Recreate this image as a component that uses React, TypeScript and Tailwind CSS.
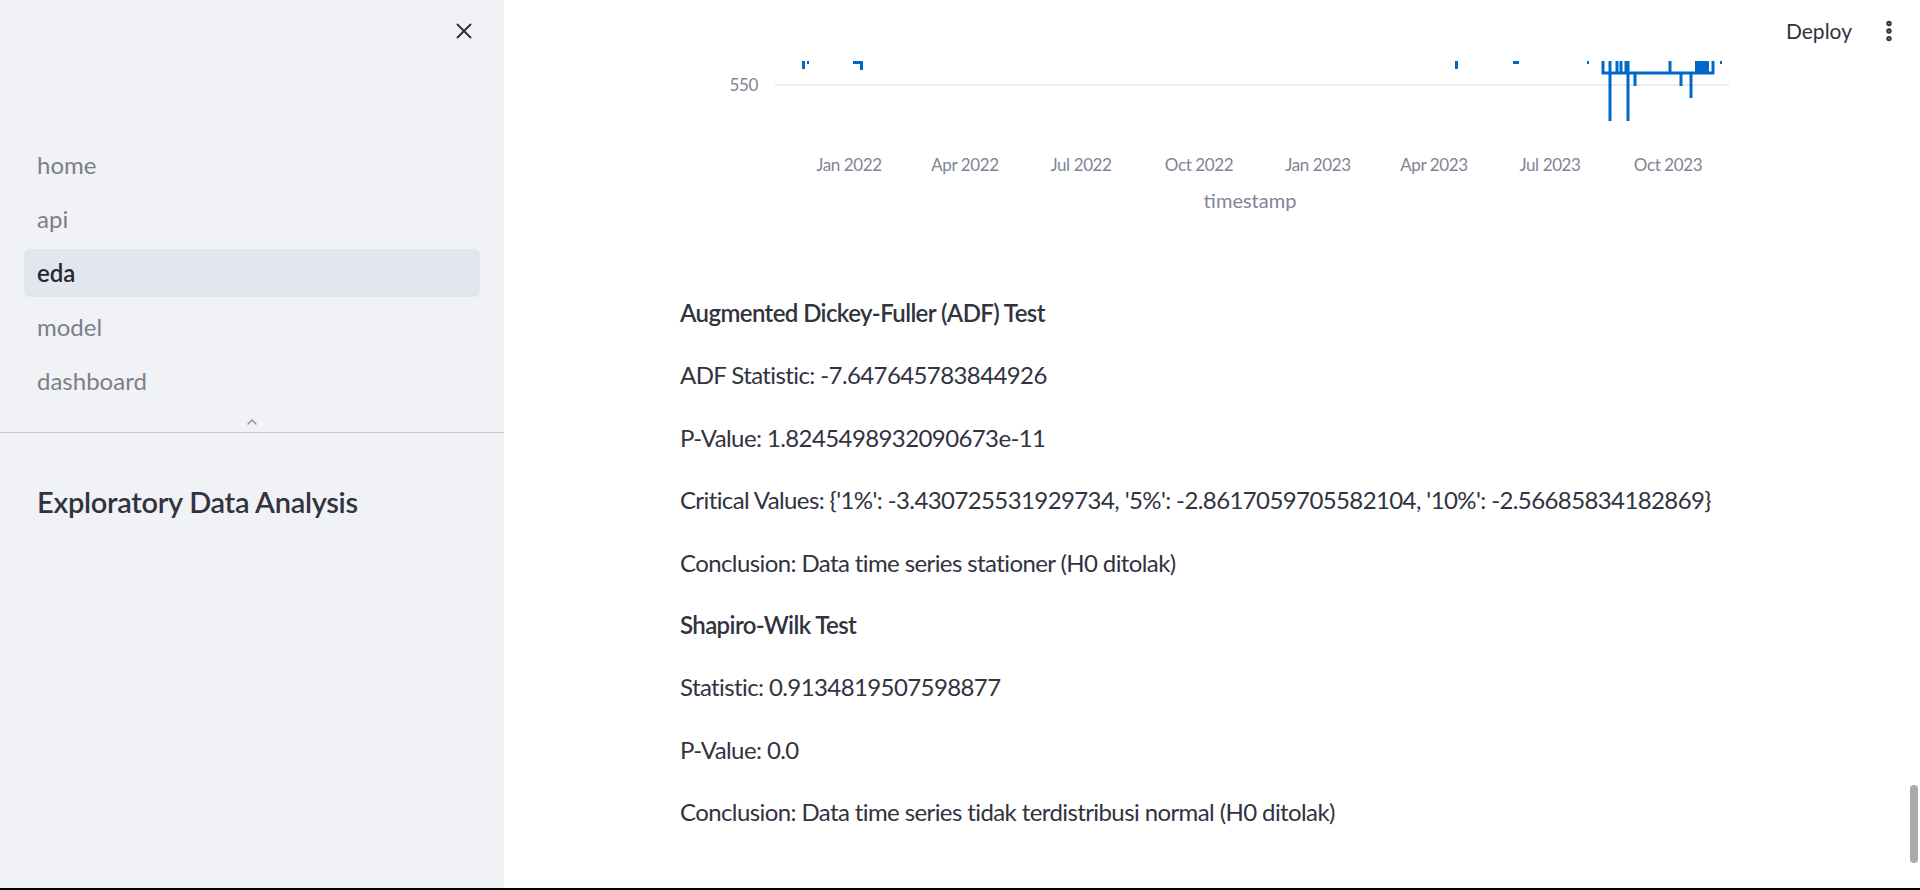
import { X, ChevronUp, EllipsisVertical } from "lucide-react";

const navItems = ["home", "api", "eda", "model", "dashboard"];

const ticks = [
  { x: 169, label: "Jan 2022" },
  { x: 285, label: "Apr 2022" },
  { x: 401, label: "Jul 2022" },
  { x: 519, label: "Oct 2022" },
  { x: 638, label: "Jan 2023" },
  { x: 754, label: "Apr 2023" },
  { x: 870, label: "Jul 2023" },
  { x: 988, label: "Oct 2023" },
];

const results = [
  { text: "Augmented Dickey-Fuller (ADF) Test", bold: true },
  { text: "ADF Statistic: -7.647645783844926" },
  { text: "P-Value: 1.8245498932090673e-11" },
  {
    text: "Critical Values: {'1%': -3.430725531929734, '5%': -2.8617059705582104, '10%': -2.56685834182869}",
  },
  { text: "Conclusion: Data time series stationer (H0 ditolak)" },
  { text: "Shapiro-Wilk Test", bold: true },
  { text: "Statistic: 0.9134819507598877" },
  { text: "P-Value: 0.0" },
  { text: "Conclusion: Data time series tidak terdistribusi normal (H0 ditolak)" },
];

function Chart() {
  const blue = "#0068c9";
  return (
    <svg width="1064" height="170" viewBox="0 0 1064 170" className="block">
      <line x1="95" y1="24" x2="1049" y2="24" stroke="#e6e6e6" strokeWidth="1.5" />
      <text x="78" y="30" textAnchor="end" fontSize="17" fill="#808495" fontFamily="Lato, sans-serif" letterSpacing="-0.4">
        550
      </text>
      {ticks.map((t) => (
        <text
          key={t.label}
          x={t.x}
          y="110"
          textAnchor="middle"
          fontSize="17"
          fill="#808495"
          fontFamily="Lato, sans-serif"
          letterSpacing="-0.4"
        >
          {t.label}
        </text>
      ))}
      <text x="570" y="147" textAnchor="middle" fontSize="20" fill="#808495" fontFamily="Lato, sans-serif">
        timestamp
      </text>

      {/* early sparse points */}
      <rect x="122" y="0" width="3" height="8" fill={blue} />
      <rect x="127" y="0" width="2" height="3" fill={blue} />
      <rect x="173" y="0" width="10" height="3" fill={blue} />
      <rect x="180" y="0" width="3" height="9" fill={blue} />
      <rect x="775" y="0" width="3" height="8" fill={blue} />
      <rect x="833" y="0" width="6" height="3" fill={blue} />
      <rect x="907" y="0" width="2" height="3" fill={blue} />

      {/* dense cluster */}
      <g stroke={blue} strokeWidth="3" fill="none">
        <path d="M923 0 V12 H1033 V0" />
        <path d="M930 0 V60" />
        <path d="M937 0 V12" />
        <path d="M941 0 V12" />
        <path d="M946 0 V12" />
        <path d="M948 0 V60" />
        <path d="M955 12 V25" />
        <path d="M990 0 V12" />
        <path d="M1001 12 V25" />
        <path d="M1011 12 V37" />
      </g>
      <rect x="1015" y="0" width="14" height="12" fill={blue} />
      <rect x="1040" y="0" width="2" height="3" fill={blue} />
    </svg>
  );
}

export default function App() {
  return (
    <div className="w-[1920px] h-[890px] overflow-hidden flex flex-col bg-white font-['Lato',sans-serif] text-[#31333f]">
      <div className="flex flex-1 min-h-0">
        <aside className="w-[504px] shrink-0 bg-[#f0f2f6] flex flex-col">
          <div className="h-[62px] flex justify-end items-center pr-[27px]">
            <X size={26} strokeWidth={1.8} className="text-[#31333f]" />
          </div>
          <nav className="flex flex-col gap-[6px] px-[24px] pt-[79px]">
            {navItems.map((item) =>
              item === "eda" ? (
                <div
                  key={item}
                  className="h-[48px] flex items-center px-[13px] rounded-md bg-[#e2e6ee] text-[24px] font-semibold text-[#262730]"
                >
                  {item}
                </div>
              ) : (
                <div key={item} className="h-[48px] flex items-center px-[13px] text-[24px] text-[#7d7e86]">
                  {item}
                </div>
              )
            )}
          </nav>
          <div className="h-[27px] flex items-end justify-center pb-[2px]">
            <ChevronUp size={16} strokeWidth={2} className="text-[#8a8c94]" />
          </div>
          <div className="h-px bg-[#c9cbd1]" />
          <h3 className="px-[37px] pt-[47px] text-[29px] tracking-[-0.3px] font-semibold text-[#31333f]">
            Exploratory Data Analysis
          </h3>
        </aside>

        <main className="flex-1 relative">
          <header className="absolute top-0 left-0 right-0 h-[61px] bg-white flex items-center justify-end pr-[18px] gap-[24px] z-10">
            <span className="text-[21px] text-[#31333f]">Deploy</span>
            <EllipsisVertical size={26} strokeWidth={3} className="text-[#31333f]" />
          </header>

          <div className="pl-[176px] pt-[61px]">
            <Chart />
            <div className="pt-[63px]">
              {results.map((r) => (
                <p
                  key={r.text}
                  className={`text-[24px] leading-[38.4px] mb-[24px] tracking-[-0.6px] ${r.bold ? "font-semibold" : ""}`}
                >
                  {r.text}
                </p>
              ))}
            </div>
          </div>

          <div className="absolute right-[2px] top-[785px] w-[8px] h-[78px] rounded-full bg-[#a9a9ae]" />
        </main>
      </div>
      <div className="h-[2px] bg-black" />
    </div>
  );
}
